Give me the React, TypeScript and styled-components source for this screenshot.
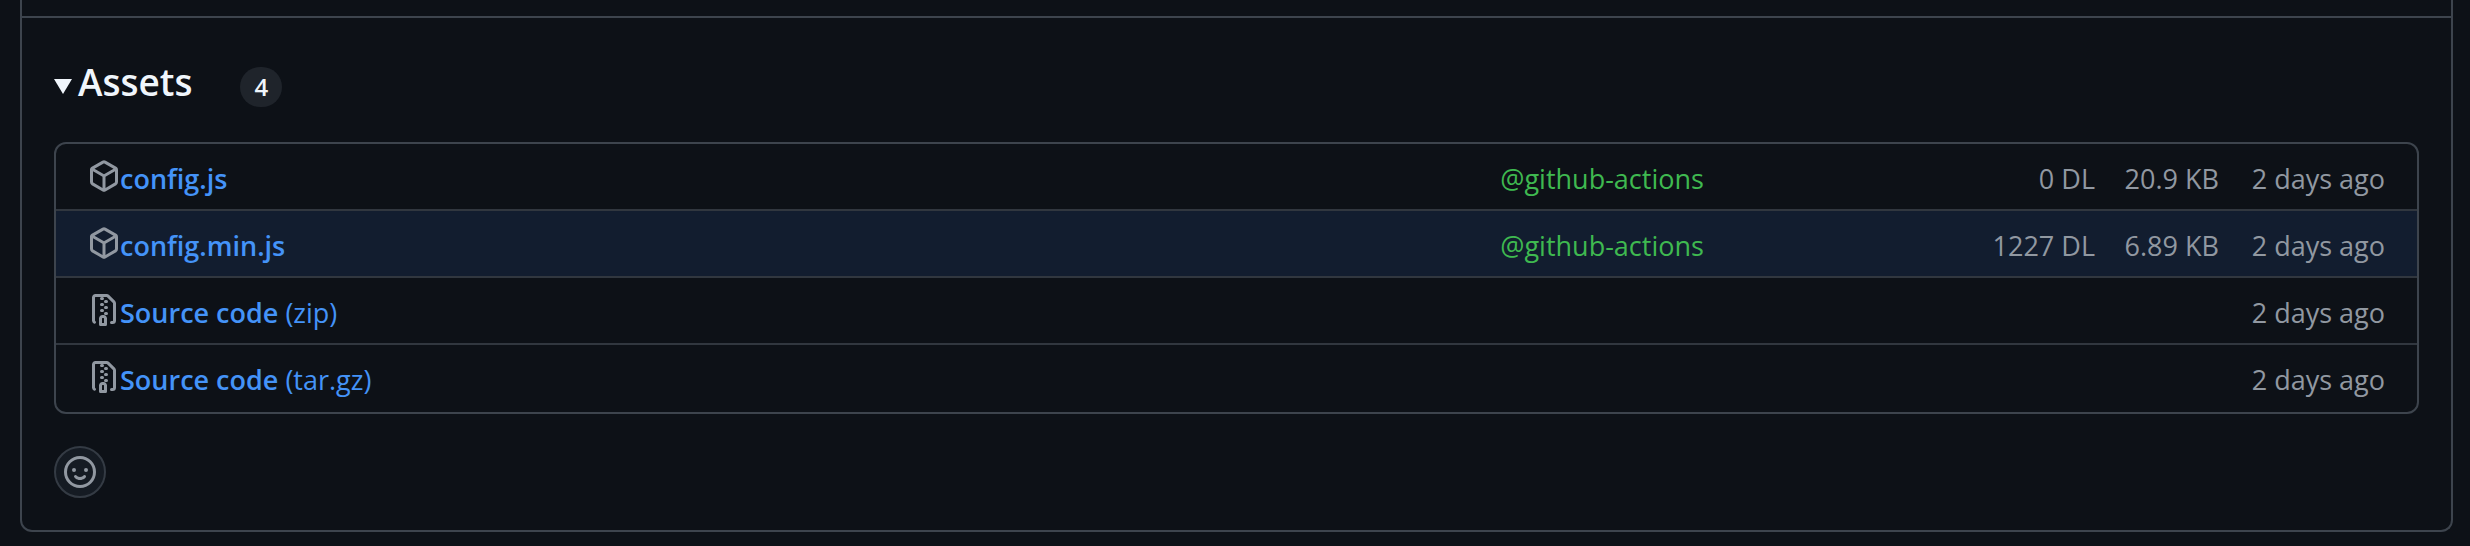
import React from "react";
import styled, { createGlobalStyle } from "styled-components";

const color = {
  canvas: "#0d1117",
  border: "#3d444d",
  divider: "#31373f",
  text: "#f0f6fc",
  muted: "#9198a1",
  link: "#4493f8",
  author: "#3fb950",
  highlight: "#121d2f",
  counter: "#1f242b",
  control: "#151b23",
};

const GlobalStyle = createGlobalStyle`
  * { box-sizing: border-box; }
  body {
    margin: 0;
    background: ${color.canvas};
    color: ${color.text};
    font-family: "Segoe UI", "Open Sans", "Noto Sans", sans-serif;
    font-size: 27px;
    line-height: 38px;
  }
`;

const Page = styled.main`
  padding: 0 17px 14px 20px;
`;

const ReleaseCard = styled.article`
  border: 2px solid ${color.border};
  border-top: 0;
  border-radius: 0 0 12px 12px;
`;

const ReleaseBody = styled.div`
  height: 16px;
`;

const ReleaseFooter = styled.footer`
  border-top: 2px solid ${color.border};
  padding: 32px;
`;

const Disclosure = styled.details`
  margin-bottom: 32px;
`;

const Summary = styled.summary`
  display: flex;
  align-items: baseline;
  gap: 6px;
  margin-bottom: 28px;
  list-style: none;
  cursor: pointer;
  &::-webkit-details-marker { display: none; }
`;

const Marker = styled.svg`
  width: 18px;
  height: 17px;
  fill: currentColor;
`;

const Title = styled.h2`
  margin: 0 42px 0 0;
  font-size: 37px;
  font-weight: 600;
  line-height: 64px;
`;

const Counter = styled.span`
  min-width: 42px;
  padding: 0 12px;
  border-radius: 20px;
  background: ${color.counter};
  font-size: 24px;
  font-weight: 600;
  line-height: 40px;
  text-align: center;
`;

const AssetBox = styled.div`
  border: 2px solid ${color.border};
  border-radius: 12px;
  padding-bottom: 2px;
  overflow: hidden;
`;

const AssetTable = styled.table`
  width: 100%;
  table-layout: fixed;
  border-collapse: separate;
  border-spacing: 0;
`;

const Column = styled.col<{ $width?: string }>`
  width: ${(p) => p.$width ?? "auto"};
`;

const AssetRow = styled.tr<{ $active?: boolean }>`
  background: ${(p) => (p.$active ? color.highlight : "transparent")};
  &:not(:first-child) > td { border-top: 2px solid ${color.divider}; }
`;

const Cell = styled.td`
  padding: 16px 0 11px;
  white-space: nowrap;
`;

const NameCell = styled(Cell)`
  padding-left: 32px;
`;

const AuthorCell = styled(Cell)`
  padding-left: 4px;
`;

const MetaCell = styled(Cell)`
  color: ${color.muted};
  text-align: right;
`;

const DateCell = styled(MetaCell)`
  padding-right: 32px;
`;

const AssetName = styled.div`
  display: flex;
  align-items: flex-start;
`;

const Icon = styled.svg`
  display: block;
  flex: none;
  width: 32px;
  height: 32px;
  fill: ${color.muted};
`;

const AssetLink = styled.a`
  color: ${color.link};
  text-decoration: none;
`;

const Strong = styled.span`
  font-weight: 600;
`;

const AuthorLink = styled.a`
  color: ${color.author};
  text-decoration: none;
`;

const ReactionButton = styled.button`
  display: grid;
  place-items: center;
  width: 52px;
  height: 52px;
  padding: 0;
  border: 2px solid #343b44;
  border-radius: 50%;
  background: ${color.control};
  cursor: pointer;
`;

const paths = {
  package:
    "m8.878.392 5.25 3.045c.54.314.872.89.872 1.514v6.098a1.75 1.75 0 0 1-.872 1.514l-5.25 3.045a1.75 1.75 0 0 1-1.756 0l-5.25-3.045A1.75 1.75 0 0 1 1 11.049V4.951c0-.624.332-1.201.872-1.514L7.122.392a1.75 1.75 0 0 1 1.756 0ZM7.875 1.69l-4.63 2.685L8 7.133l4.755-2.758-4.63-2.685a.248.248 0 0 0-.25 0ZM2.5 5.677v5.372c0 .09.047.171.125.216l4.625 2.683V8.432Zm6.25 8.271 4.625-2.683a.25.25 0 0 0 .125-.216V5.677L8.75 8.432Z",
  zip:
    "M3.5 1.75v11.5c0 .09.048.173.126.217a.75.75 0 0 1-.752 1.298A1.748 1.748 0 0 1 2 13.25V1.75C2 .784 2.784 0 3.75 0h5.586c.464 0 .909.185 1.237.513l2.914 2.914c.329.328.513.773.513 1.237v8.586A1.75 1.75 0 0 1 12.25 15h-.5a.75.75 0 0 1 0-1.5h.5a.25.25 0 0 0 .25-.25V4.664a.25.25 0 0 0-.073-.177L9.513 1.573a.25.25 0 0 0-.177-.073H7.25a.75.75 0 0 1 0 1.5h-.5a.75.75 0 0 1 0-1.5h-3a.25.25 0 0 0-.25.25Zm3.75 8.75h.5c.966 0 1.75.784 1.75 1.75v3a.75.75 0 0 1-.75.75h-2.5a.75.75 0 0 1-.75-.75v-3c0-.966.784-1.75 1.75-1.75ZM6 5.25a.75.75 0 0 1 .75-.75h.5a.75.75 0 0 1 0 1.5h-.5A.75.75 0 0 1 6 5.25Zm.75 2.25h.5a.75.75 0 0 1 0 1.5h-.5a.75.75 0 0 1 0-1.5ZM8 6.75A.75.75 0 0 1 8.75 6h.5a.75.75 0 0 1 0 1.5h-.5A.75.75 0 0 1 8 6.75ZM8.75 3h.5a.75.75 0 0 1 0 1.5h-.5a.75.75 0 0 1 0-1.5ZM8 9.75A.75.75 0 0 1 8.75 9h.5a.75.75 0 0 1 0 1.5h-.5A.75.75 0 0 1 8 9.75Zm-1 2.5v2.25h1v-2.25a.25.25 0 0 0-.25-.25h-.5a.25.25 0 0 0-.25.25Z",
  smiley:
    "M8 0a8 8 0 1 1 0 16A8 8 0 0 1 8 0ZM1.5 8a6.5 6.5 0 1 0 13 0 6.5 6.5 0 0 0-13 0Zm3.82 1.636a.75.75 0 0 1 1.038.175l.007.009c.103.118.22.222.35.31.264.178.683.37 1.285.37.602 0 1.02-.192 1.285-.371.13-.088.247-.192.35-.31l.007-.008a.75.75 0 0 1 1.222.87l-.021.03a3.3 3.3 0 0 1-.714.658c-.474.322-1.18.631-2.129.631-.946 0-1.652-.308-2.126-.63a3.331 3.331 0 0 1-.736-.688.75.75 0 0 1 .182-1.044ZM12 7a1 1 0 1 1-2 0 1 1 0 0 1 2 0ZM5 8a1 1 0 1 1 0-2 1 1 0 0 1 0 2Z",
};

type Asset = {
  icon: "package" | "zip";
  name: string;
  format?: string;
  author?: string;
  downloads?: string;
  size?: string;
  date: string;
  active?: boolean;
};

const assets: Asset[] = [
  { icon: "package", name: "config.js", author: "@github-actions", downloads: "0 DL", size: "20.9 KB", date: "2 days ago" },
  { icon: "package", name: "config.min.js", author: "@github-actions", downloads: "1227 DL", size: "6.89 KB", date: "2 days ago", active: true },
  { icon: "zip", name: "Source code", format: "(zip)", date: "2 days ago" },
  { icon: "zip", name: "Source code", format: "(tar.gz)", date: "2 days ago" },
];

function Glyph({ name }: { name: keyof typeof paths }) {
  return (
    <Icon viewBox="0 0 16 16" aria-hidden="true">
      <path d={paths[name]} />
    </Icon>
  );
}

export default function App() {
  return (
    <>
      <GlobalStyle />
      <Page>
        <ReleaseCard>
          <ReleaseBody />
          <ReleaseFooter>
            <Disclosure open>
              <Summary>
                <Marker viewBox="0 0 18 17" aria-hidden="true">
                  <path d="M0 0h18L9 15z" />
                </Marker>
                <Title>Assets</Title>
                <Counter>4</Counter>
              </Summary>
              <AssetBox>
                <AssetTable aria-label="Assets">
                  <colgroup>
                    <Column $width="61%" />
                    <Column />
                    <Column $width="200px" />
                    <Column $width="124px" />
                    <Column $width="198px" />
                  </colgroup>
                  <tbody>
                    {assets.map((a) => (
                      <AssetRow key={a.name + (a.format ?? "")} $active={a.active}>
                        <NameCell>
                          <AssetName>
                            <Glyph name={a.icon} />
                            <AssetLink href="#">
                              <Strong>{a.name}</Strong>
                              {a.format && ` ${a.format}`}
                            </AssetLink>
                          </AssetName>
                        </NameCell>
                        <AuthorCell>{a.author && <AuthorLink href="#">{a.author}</AuthorLink>}</AuthorCell>
                        <MetaCell>{a.downloads}</MetaCell>
                        <MetaCell>{a.size}</MetaCell>
                        <DateCell>{a.date}</DateCell>
                      </AssetRow>
                    ))}
                  </tbody>
                </AssetTable>
              </AssetBox>
            </Disclosure>
            <ReactionButton type="button" aria-label="Add your reaction">
              <Glyph name="smiley" />
            </ReactionButton>
          </ReleaseFooter>
        </ReleaseCard>
      </Page>
    </>
  );
}
